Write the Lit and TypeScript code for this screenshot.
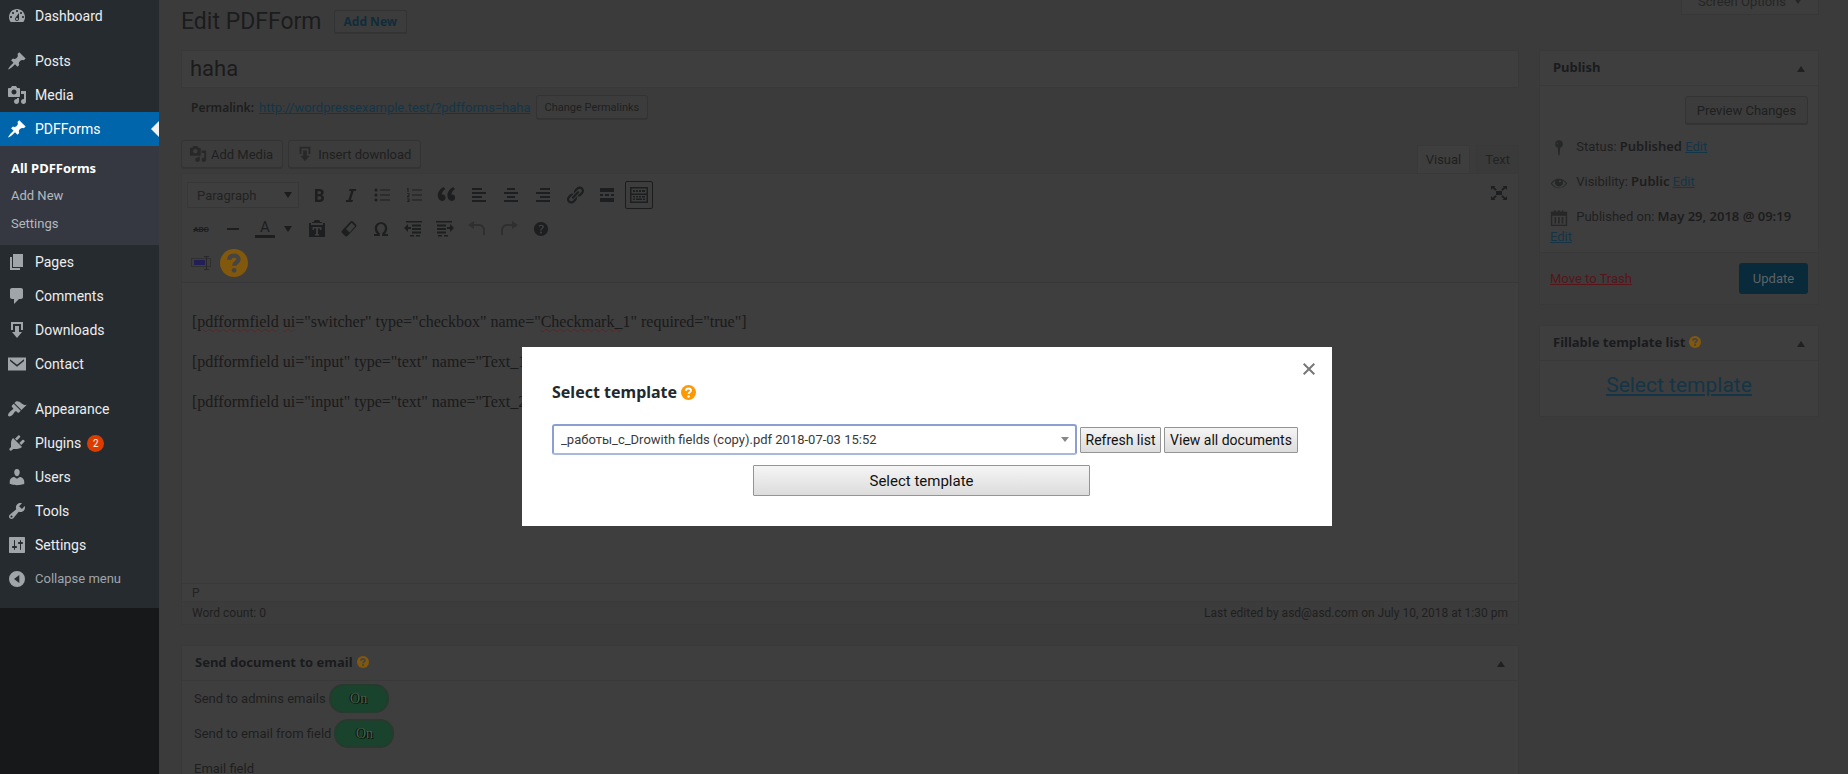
import { LitElement, html, svg, css, nothing } from "lit";
import { customElement } from "lit/decorators.js";
import { classMap } from "lit/directives/class-map.js";

const P: Record<string, string> = {
  dashboard: "M3.76 16h12.48c1.1-1.37 1.76-3.11 1.76-5 0-4.42-3.58-8-8-8s-8 3.58-8 8c0 1.89.66 3.63 1.76 5zM10 4c.55 0 1 .45 1 1s-.45 1-1 1-1-.45-1-1 .45-1 1-1zM6 6c.55 0 1 .45 1 1s-.45 1-1 1-1-.45-1-1 .45-1 1-1zm8 0c.55 0 1 .45 1 1s-.45 1-1 1-1-.45-1-1 .45-1 1-1zm-5.37 5.55L12 7v6c0 1.1-.9 2-2 2s-2-.9-2-2c0-.57.24-1.08.63-1.45zM4 10c.55 0 1 .45 1 1s-.45 1-1 1-1-.45-1-1 .45-1 1-1zm12 0c.55 0 1 .45 1 1s-.45 1-1 1-1-.45-1-1 .45-1 1-1zm-5 3c0-.55-.45-1-1-1s-1 .45-1 1 .45 1 1 1 1-.45 1-1z",
  pin: "M10.44 3.02l1.82-1.82 6.36 6.35-1.83 1.82c-1.05-.68-2.48-.57-3.41.36l-.75.75c-.92.93-1.04 2.35-.35 3.41l-1.83 1.82-2.41-2.41-2.8 2.79c-.42.42-3.38 2.71-3.8 2.29s1.86-3.39 2.28-3.81l2.79-2.79L4.1 9.36l1.83-1.82c1.05.69 2.48.57 3.4-.36l.75-.75c.93-.92 1.05-2.35.36-3.41z",
  media: "M13 11V4c0-.55-.45-1-1-1h-1.67L9 1H5L3.67 3H2c-.55 0-1 .45-1 1v7c0 .55.45 1 1 1h10c.55 0 1-.45 1-1zM7 4.5c1.38 0 2.5 1.12 2.5 2.5S8.38 9.5 7 9.5 4.5 8.38 4.5 7 5.62 4.5 7 4.5zM14 6h5v10.5c0 1.38-1.12 2.5-2.5 2.5S14 17.88 14 16.5s1.12-2.5 2.5-2.5c.17 0 .34.02.5.05V9h-3V6zm-4 8.05V13h2v3.5c0 1.38-1.12 2.5-2.5 2.5S7 17.88 7 16.5 8.12 14 9.5 14c.17 0 .34.02.5.05z",
  pages: "M6 15V2h10v13H6zm-1 1h8v2H3V5h2v11z",
  comments: "M5 2h9c1.1 0 2 .9 2 2v7c0 1.1-.9 2-2 2h-2l-5 5v-5H5c-1.1 0-2-.9-2-2V4c0-1.1.9-2 2-2z",
  download: "M14.01 4v6h2V2H4v8h2.01V4h8zm-2 2v6h3l-5 6-5-6h3V6h4z",
  email: "M1 3.500h18v13H1zM3 5.200v1.900l7 5.600 7-5.600V5.200l-7 5.600z",
  appearance: "M14.48 11.06L7.41 3.99l1.5-1.5c.5-.56 2.3-.47 3.51.32 1.21.8 1.43 1.28 2.91 2.1 1.18.64 2.45 1.26 4.45.85zm-.71.71L6.7 4.7 4.93 6.47c-.39.39-.39 1.02 0 1.41l1.06 1.06c.39.39.39 1.03 0 1.42-.6.6-1.43 1.11-2.21 1.69-.35.26-.7.53-1.01.84C1.43 14.23.4 16.08 1.4 17.07c.99 1 2.84-.03 4.18-1.36.31-.31.58-.66.85-1.02.57-.78 1.08-1.61 1.69-2.21.39-.39 1.02-.39 1.41 0l1.06 1.06c.39.39 1.02.39 1.41 0z",
  plugins: "M13.11 4.36L9.87 7.6 8 5.73l3.24-3.24c.35-.34 1.05-.2 1.56.32.52.51.66 1.21.31 1.55zm-8 1.77l.91-1.12 9.01 9.01-1.19.84c-.71.71-2.63 1.16-3.82 1.16H6.14L4.9 17.26c-.59.59-1.54.59-2.12 0-.59-.58-.59-1.53 0-2.12l1.24-1.24v-3.88c0-1.13.4-3.19 1.09-3.89zm7.26 3.97l3.24-3.24c.34-.35 1.04-.21 1.55.31.52.51.66 1.21.31 1.55l-3.24 3.25z",
  users: "M10 9.25c-2.27 0-2.73-3.44-2.73-3.44C7 4.02 7.82 2 9.97 2c2.16 0 2.98 2.02 2.71 3.81 0 0-.41 3.44-2.68 3.44zm0 2.57L12.72 10c2.39 0 4.52 2.33 4.52 4.53v2.49s-3.65 1.13-7.24 1.13c-3.65 0-7.24-1.13-7.24-1.13v-2.49c0-2.25 1.94-4.48 4.47-4.48z",
  tools: "M16.68 9.77c-1.34 1.34-3.3 1.67-4.95.99l-5.41 6.52c-.99.99-2.59.99-3.58 0s-.99-2.59 0-3.57l6.52-5.42c-.68-1.65-.35-3.61.99-4.95 1.28-1.28 3.12-1.62 4.72-1.06l-2.89 2.89 2.82 2.82 2.86-2.87c.53 1.58.18 3.39-1.08 4.65zM3.81 16.21c.4.39 1.04.39 1.43 0 .4-.4.4-1.04 0-1.43-.39-.4-1.03-.4-1.43 0-.39.39-.39 1.03 0 1.43z",
  settings: "M18 17V3c0-.55-.45-1-1-1H3c-.55 0-1 .45-1 1v14c0 .55.45 1 1 1h14c.55 0 1-.45 1-1zM8 11h1c.55 0 1 .45 1 1s-.45 1-1 1H8v1.5c0 .28-.22.5-.5.5s-.5-.22-.5-.5V13H6c-.55 0-1-.45-1-1s.45-1 1-1h1V5.5c0-.28.22-.5.5-.5s.5.22.5.5V11zm5-2h-1c-.55 0-1-.45-1-1s.45-1 1-1h1V5.5c0-.28.22-.5.5-.5s.5.22.5.5V7h1c.55 0 1 .45 1 1s-.45 1-1 1h-1v5.5c0 .28-.22.5-.5.5s-.5-.22-.5-.5V9z",
  collapse: "M10 2a8 8 0 1 0 0 16 8 8 0 0 0 0-16zM12.300 6v8L7 10z",
  bold: "M6 4v13h4.540c1.370 0 2.460-.33 3.260-1 .8-.66 1.200-1.580 1.200-2.770 0-.84-.17-1.510-.51-2.010s-.9-.85-1.670-1.030v-.09c.57-.1 1.020-.4 1.360-.9s.51-1.130.51-1.910c0-1.140-.39-1.980-1.170-2.500C12.750 4.260 11.500 4 9.780 4H6zm2.570 5.150V6.260h1.360c.73 0 1.270.11 1.610.32.34.22.51.58.51 1.070 0 .54-.16.92-.47 1.150s-.82.35-1.510.35h-1.500zm0 2.190h1.600c1.440 0 2.160.53 2.160 1.610 0 .6-.17 1.050-.51 1.340s-.86.43-1.570.43H8.570v-3.380z",
  italic: "M14.780 6h-2.130l-2.800 9h2.120l-.62 2H4.600l.62-2h2.140l2.800-9H8.030l.62-2h6.750z",
  ul: "M3 3.500a1.500 1.500 0 1 1 0 3 1.500 1.500 0 0 1 0-3zm0 5a1.500 1.500 0 1 1 0 3 1.500 1.500 0 0 1 0-3zm0 5a1.500 1.500 0 1 1 0 3 1.500 1.500 0 0 1 0-3zM7 4.500h10V5.500H7zM7 9.500h10V10.500H7zM7 14.500h10V15.500H7z",
  ol: "M3.500 3v4h-1V4.500H2V3.500zM2 8.300h2.500v2L3.200 11.500h1.300v.8H2v-1l1.500-1.400V9.100H2zM2 13.500h2.500V17H2v-.8h1.500v-.6H2.400v-.7h1.100v-.6H2zM7 4.500h10V5.500H7zM7 9.500h10V10.500H7zM7 14.500h10V15.500H7z",
  quote: "M8.540 12.740c0-.87-.24-1.610-.72-2.220-.73-.92-2.140-1.030-2.960-.85-.34-1.930 1.300-4.390 3.420-5.450L6.650 1.940C3.450 3.460.31 6.960.85 11.370 1.190 14.160 2.800 16 5.080 16c1.040 0 1.900-.32 2.520-.94.63-.62.94-1.390.94-2.320zm9.590 0c0-.87-.24-1.610-.72-2.220-.73-.92-2.140-1.030-2.960-.85-.34-1.930 1.300-4.390 3.420-5.450l-1.630-2.280c-3.200 1.520-6.340 5.020-5.800 9.430.34 2.790 1.950 4.630 4.230 4.630 1.040 0 1.900-.32 2.520-.94.63-.62.94-1.390.94-2.320z",
  left: "M3 3h10v2H3zM3 7h14v2H3zM3 11h10v2H3zM3 15h14v2H3z",
  center: "M6 3h8v2H6zM3 7h14v2H3zM6 11h8v2H6zM3 15h14v2H3z",
  right: "M7 3h10v2H7zM3 7h14v2H3zM7 11h10v2H7zM3 15h14v2H3z",
  link: "M17.740 2.760c1.680 1.690 1.680 4.410 0 6.100l-1.530 1.520c-1.120 1.120-2.700 1.470-4.140 1.090l2.620-2.610.76-.77.76-.76c.84-.84.84-2.200 0-3.040-.84-.85-2.200-.85-3.040 0l-.77.76-3.380 3.380c-.37-1.440-.02-3.020 1.100-4.140l1.520-1.530c1.690-1.680 4.420-1.680 6.100 0zM8.590 13.430l5.340-5.340c.42-.42.42-1.100 0-1.520-.44-.43-1.130-.39-1.530 0l-5.330 5.340c-.42.42-.42 1.100 0 1.520.44.43 1.130.39 1.520 0zm-.76 2.290l4.140-4.150c.38 1.440.03 3.020-1.090 4.140l-1.520 1.530c-1.690 1.680-4.410 1.680-6.100 0-1.680-1.680-1.680-4.420 0-6.100l1.530-1.520c1.120-1.120 2.700-1.470 4.140-1.100l-4.140 4.150c-.85.84-.85 2.200 0 3.050.84.840 2.200.840 3.040 0z",
  more: "M3 3h14v4H3zM3 9h3v2H3zM8 9h4v2H8zM14 9h3v2h-3zM3 13h14v4H3z",
  kitchen: "M1 2h18v16H1zM2.500 3.500v5h15v-5zM2.500 10v6.500h15V10zM4 5h2v2H4zM7 5h2v2H7zM10 5h2v2h-2zM13 5h3v2h-3zM4 11h2v1.500H4zM7 11h2v1.500H7zM10 11h2v1.500h-2zM13 11h3v1.500h-3zM4 13.500h2V15H4zM7 13.500h6V15H7zM14 13.500h2V15h-2z",
  paste: "M7 3V2.500C7 1.600 7.600 1 8.500 1h3c.9 0 1.500.6 1.500 1.500V3h2v1H5V3zM2 4h2v2h12V4h2v14H2zM5.500 8v3H7v-1.500h2V15H8v1.500h4V15h-1V9.500h2V11h1.500V8z",
  eraser: "M11.500 2.500c.7-.7 1.700-.7 2.400 0l3 3c.7.7.7 1.700 0 2.400L8.500 17c-.7.7-1.700.7-2.400 0l-3-3c-.7-.7-.7-1.700 0-2.400zM12.700 3.800L7 10l3.600 3.500 5.500-6.200z",
  omega: "M10 5.100c-2.400 0-3.900 1.700-3.900 4.200 0 2.100 1 3.700 2.700 5V17H3v-2h3.200C4.600 13.500 3.800 11.500 3.800 9.300 3.800 5.800 6.200 3.200 10 3.200s6.200 2.600 6.200 6.100c0 2.200-.8 4.200-2.400 5.700H17v2h-5.800v-2.700c1.700-1.300 2.700-2.900 2.700-5 0-2.500-1.500-4.200-3.900-4.200z",
  outdent: "M3 2h16v1.500H3zM9 5.500h9v2H9zM9 9h9v2H9zM9 12.500h9v2H9zM7 16h4v1.500H7zM13 16h4v1.500h-4zM1 9l4-4v3h3v2H5v3z",
  indent: "M1 2h16v1.500H1zM2 5.500h9v2H2zM2 9h9v2H2zM2 12.500h9v2H2zM3 16h4v1.500H3zM9 16h4v1.500H9zM19 9l-4-4v3h-3v2h3v3z",
  undo: "M12 5H7V2L1 6l6 4V7h5c2.200 0 4 1.800 4 4v5h2v-5c0-3.300-2.700-6-6-6z",
  redo: "M8 5h5V2l6 4-6 4V7H8c-2.200 0-4 1.800-4 4v5H2v-5c0-3.300 2.700-6 6-6z",
  help: "M17 10c0-3.870-3.140-7-7-7-3.870 0-7 3.130-7 7s3.130 7 7 7c3.860 0 7-3.130 7-7zm-6.300 1.480H9.140v-.43c0-.38.08-.7.24-.98s.46-.57.88-.89c.41-.29.68-.53.81-.71.14-.18.2-.39.2-.62 0-.25-.09-.44-.28-.58-.19-.13-.45-.19-.79-.19-.58 0-1.250.19-2 .57l-.64-1.280c.87-.49 1.800-.74 2.770-.74.81 0 1.450.2 1.920.58.48.39.71.91.71 1.550 0 .43-.09.8-.29 1.110-.19.32-.57.67-1.110 1.060-.38.28-.61.49-.71.63-.1.15-.15.34-.15.570v.35zm-1.470 2.740c-.18-.17-.27-.42-.27-.73 0-.33.08-.58.26-.75s.43-.25.77-.25c.32 0 .57.09.75.26s.27.42.27.74c0 .3-.09.55-.27.72-.18.18-.43.27-.75.27-.33 0-.58-.09-.76-.26z",
  full: "M7 8h6v4H7zM2 3h4.500L5.200 4.200l2.600 2.300L6.500 7.700 3.500 5.200 2 7zM18 3v4l-1.500-1.800-3 2.500-1.300-1.200 2.600-2.300L13.500 3zM2 17v-4l1.500 1.800 3-2.500 1.300 1.200-2.600 2.300L6.500 17zM18 17h-4.500l1.300-1.200-2.600-2.300 1.300-1.200 3 2.500L18 13z",
  status: "M10 1.500a4.200 4.200 0 0 1 1.300 8.200L10.800 17l-.8 2-.8-2-.5-7.300A4.200 4.200 0 0 1 10 1.500zM8.300 4c-.8.5-1.100 1.200-1 2 .9-.2 1.600-.8 2-1.700z",
  eye: "M18.300 9.500C15 4.900 8.500 3.800 3.900 7.200 2.700 8 1.700 9.300.9 10.500c.8 1.200 1.800 2.400 3 3.300 4.600 3.300 11.100 2.200 14.400-2.400l.8-.9zM10.100 7.200c.5-.5 1.300-.5 1.800 0s.5 1.300 0 1.800-1.300.5-1.800 0-.5-1.300 0-1.800zM10 15.200c-3.300 0-5.900-2-7.700-4.700C3.400 9 4.700 7.800 6.300 7a4.400 4.400 0 1 0 7.400 0c1.500.8 2.900 2 4 3.500-1.900 2.700-4.400 4.700-7.700 4.700z",
  calendar: "M15 3h4v16H1V3h3c0-.8.600-1.500 1.400-1.500S7 2.200 7 3h1.500c0-.8.600-1.500 1.500-1.500s1.500.7 1.500 1.500H13c0-.8.300-1.500 1-1.500s1 .7 1 1.500zM2.500 7.500v10h15v-10zM5 9h1.800v7H5zM9 9h1.800v7H9zM13 9h1.800v7H13z",
};
const icon = (name: string, size = 20) => html`<svg class="ic" width=${size} height=${size} viewBox="0 0 20 20" fill="currentColor" fill-rule="evenodd" aria-hidden="true">${svg`<path d=${P[name]}></path>`}</svg>`;
const qmark = (cls: string) => html`<svg class="q ${cls}" viewBox="0 0 20 20" aria-hidden="true"><circle class="qc" cx="10" cy="10" r="10"></circle><path class="qp" d="M6.600 7.800C6.700 5.600 8.200 4.700 10 4.700c1.900 0 3.300 1 3.300 2.700 0 2.300-3.200 2.200-3.200 4.600"></path><circle class="qd" cx="10.100" cy="15.200" r="1.700"></circle></svg>`;

type Item = { icon: string; text: string; gap?: boolean; current?: boolean; badge?: string };
const MENU: Item[] = [
  { icon: "dashboard", text: "Dashboard" },
  { icon: "pin", text: "Posts", gap: true },
  { icon: "media", text: "Media" },
  { icon: "pin", text: "PDFForms", current: true },
  { icon: "pages", text: "Pages" },
  { icon: "comments", text: "Comments" },
  { icon: "download", text: "Downloads" },
  { icon: "email", text: "Contact" },
  { icon: "appearance", text: "Appearance", gap: true },
  { icon: "plugins", text: "Plugins", badge: "2" },
  { icon: "users", text: "Users" },
  { icon: "tools", text: "Tools" },
  { icon: "settings", text: "Settings" },
];

@customElement("admin-menu")
export class AdminMenu extends LitElement {
  static styles = css`
    :host { display: block; background: #17181a; }
    nav { background: #262b30; padding-bottom: 12px; margin-top: -1px; }
    ul { list-style: none; margin: 0; padding: 0; }
    a, button { box-sizing: border-box; display: flex; align-items: center; height: 34px; width: 100%; padding: 0 0 0 7px; gap: 8px; color: #eee; font: 14px/18px Roboto, sans-serif; text-decoration: none; background: none; border: 0; text-align: left; position: relative; }
    .ic { color: #a0a5aa; flex: none; }
    .gap { margin-top: 11px; }
    .current > a { background: #0065ab; color: #fff; }
    .current > a .ic { color: #fff; }
    .current > a::after { content: ""; position: absolute; right: 0; top: 9px; border: 8px solid transparent; border-left: 0; border-right-color: #f1f1f1; }
    .sub { background: #353840; padding: 8px 0 7px; }
    .sub a { height: 28px; padding-left: 11px; font-size: 13px; color: #b4b9be; }
    .sub .on { color: #fff; font: bold 13px/18px "Noto Sans", sans-serif; }
    .badge { min-width: 17px; height: 17px; border-radius: 9px; background: #dc3c00; color: #fff; font-size: 10px; line-height: 17px; text-align: center; margin-left: -2px; }
    button { color: #a0a5aa; font-size: 13px; }
  `;
  render() {
    return html`<nav aria-label="Main menu"><ul>
      ${MENU.map((m) => html`<li class=${classMap({ gap: !!m.gap, current: !!m.current })}>
        <a href="#">${icon(m.icon)}<span>${m.text}</span>${m.badge ? html`<span class="badge">${m.badge}</span>` : nothing}</a>
        ${m.current ? html`<ul class="sub"><li><a class="on" href="#">All PDFForms</a></li><li><a href="#">Add New</a></li><li><a href="#">Settings</a></li></ul>` : nothing}
      </li>`)}
      <li><button type="button">${icon("collapse")}<span>Collapse menu</span></button></li>
    </ul></nav>`;
  }
}

const shared = css`
  * { box-sizing: border-box; }
  a { color: #143547; text-decoration: underline; }
  b { font-family: "Noto Sans", sans-serif; font-weight: 600; color: #1d1d1d; font-size: 13px; }
  button, input, select { font-family: Roboto, sans-serif; margin: 0; }
  .btn { display: inline-flex; align-items: center; justify-content: center; height: 28px; padding: 0 10px; font-size: 13px; color: #1f1f1f; background: #3c3c3c; border: 1px solid #333; border-radius: 3px; box-shadow: 0 1px 0 #343434; white-space: nowrap; }
  .box { background: #3e3e3e; border: 1px solid #393939; }
  .head { display: flex; align-items: center; height: 35px; padding: 0 13px 2px; border-bottom: 1px solid #393939; }
  h2 { margin: 0; font: bold 13px/20px "Noto Sans", sans-serif; color: #191b1d; display: flex; align-items: center; gap: 4px; flex: 1; }
  .toggle { width: 8px; height: 6px; padding: 0; border: 0; background: #202020; clip-path: polygon(50% 0, 100% 100%, 0 100%); margin: 4px 0 0; }
  .q { width: 12px; height: 12px; flex: none; }
  .qc { fill: #82580d; }
  .qp { fill: none; stroke: #444; stroke-width: 3; }
  .qd { fill: #444; }
`;

@customElement("post-editor")
export class PostEditor extends LitElement {
  static styles = [shared, css`
    :host { display: block; min-width: 0; }
    .title { display: block; width: 100%; height: 38px; padding: 0 8px 2px; font-size: 22px; color: #1b1b1b; background: #3e3e3e; border: 1px solid #383838; outline: 0; }
    .perma { display: flex; align-items: center; gap: 5px; height: 24px; margin: 7px 10px 0; font-size: 13px; }
    .perma b { font-size: 12px; }
    .small { height: 24px; font-size: 11px; padding: 0 8px; }
    .tools { display: flex; align-items: flex-end; gap: 5px; margin-top: 21px; height: 33px; }
    .tools .btn { align-self: flex-start; gap: 4px; padding: 0 9px 0 7px; }
    .tools .ic { color: #282828; }
    .tabs { display: flex; gap: 6px; margin-left: auto; }
    .tab { height: 28px; padding: 0 8px; border: 1px solid #393939; border-bottom: 0; background: #3a3a3a; color: #232323; font-size: 13px; }
    .tab.on { background: #3e3e3e; color: #1e1e1e; }
    .bar { padding: 4px 3px 0; height: 109px; border-bottom: 1px solid #373737; color: #1d1e1f; background: #3d3d3d; }
    .row { display: flex; align-items: center; height: 34px; }
    .row button { flex: none; width: 28px; height: 28px; margin: 0 2px; padding: 0; border: 1px solid transparent; background: none; color: inherit; display: flex; align-items: center; justify-content: center; }
    .row .pressed { border-color: #1c1c1c; border-radius: 2px; }
    .row .faint { color: #2f2f2f; }
    .row .narrow { width: 14px; margin: 0 6px 0 0; }
    .pick { display: flex; align-items: center; margin: 0 4px 0 2px; }
    .pick select { appearance: none; width: 112px; height: 26px; padding: 0 9px; font-size: 13px; color: #222; background: #3e3e3e; border: 1px solid #373737; }
    .tri { width: 8px; height: 6px; background: #1c1c1c; clip-path: polygon(0 0, 100% 0, 50% 100%); }
    .pick .tri { margin-left: -15px; margin-right: 7px; pointer-events: none; }
    .abc { font: bold 8px Roboto, sans-serif; text-decoration: line-through; }
    .row .full { margin: 0 2px 4px auto; }
    .fore { font: 15px/15px Roboto, sans-serif; border-bottom: 3px solid #1d1e1f; width: 20px; text-align: center; }
    .row .big { margin: 0 0 0 3px; }
    .big .q { width: 28px; height: 28px; }
    .text { padding: 13px 10px 0; height: 300px; font: 16px/24px "Liberation Serif", serif; color: #1a1a1a; }
    .text p { margin: 16px 0; }
    .text p:first-child { margin-top: 14px; }
    .sp { text-decoration: underline wavy #5f2222 1px; text-underline-offset: 1px; }
    .path { height: 18px; padding: 0 10px; border-top: 1px solid #393939; font-size: 12px; line-height: 18px; color: #222; }
    .foot { display: flex; justify-content: space-between; height: 23px; align-items: center; padding: 0 10px; border-top: 1px solid #393939; background: #3c3c3c; font-size: 12px; color: #1f1f1f; }
    .mail { margin-top: 20px; height: 160px; }
    .opt { display: flex; align-items: center; gap: 3px; height: 35px; padding: 0 12px; font-size: 13px; color: #1e1e1e; }
    .sw { width: 60px; height: 29px; padding: 0; border: 2px solid #263a2d; border-radius: 14px; background: #19432c; color: #47604f; font: 14px "Liberation Serif", serif; text-shadow: 1px 1px 0 #0a130d, -1px 0 0 #0a130d; }
  `];
  private tb(name: string, label: string, cls = "") {
    return html`<button type="button" class=${cls} aria-label=${label}>${icon(name)}</button>`;
  }
  render() {
    return html`
      <input class="title" aria-label="Title" .value=${"haha"} />
      <div class="perma"><b>Permalink:</b><a href="#">http://wordpressexample.test/?pdfforms=haha</a><button type="button" class="btn small">Change Permalinks</button></div>
      <div class="tools">
        <button type="button" class="btn">${icon("media", 18)}Add Media</button>
        <button type="button" class="btn">${icon("download", 18)}Insert download</button>
        <div class="tabs"><button type="button" class="tab on">Visual</button><button type="button" class="tab">Text</button></div>
      </div>
      <section class="box">
        <div class="bar">
          <div class="row">
            <div class="pick"><select aria-label="Block format"><option>Paragraph</option></select><span class="tri"></span></div>
            ${this.tb("bold", "Bold")}${this.tb("italic", "Italic")}${this.tb("ul", "Bulleted list")}${this.tb("ol", "Numbered list")}
            ${this.tb("quote", "Blockquote")}${this.tb("left", "Align left")}${this.tb("center", "Align center")}${this.tb("right", "Align right")}
            ${this.tb("link", "Insert link")}${this.tb("more", "Read more")}${this.tb("kitchen", "Toolbar toggle", "pressed")}
            ${this.tb("full", "Fullscreen", "full")}
          </div>
          <div class="row">
            <button type="button" aria-label="Strikethrough"><span class="abc">ABC</span></button>
            <button type="button" aria-label="Horizontal line"><svg width="12" height="2"><path d="M0 1h12" stroke="currentColor" stroke-width="2"></path></svg></button>
            <button type="button" aria-label="Text color"><span class="fore">A</span></button>
            <button type="button" class="narrow" aria-label="More colors"><span class="tri"></span></button>
            ${this.tb("paste", "Paste as text")}${this.tb("eraser", "Clear formatting")}${this.tb("omega", "Special character")}${this.tb("outdent", "Decrease indent")}
            ${this.tb("indent", "Increase indent")}${this.tb("undo", "Undo", "faint")}${this.tb("redo", "Redo", "faint")}${this.tb("help", "Keyboard shortcuts")}
          </div>
          <div class="row">
            <button type="button" aria-label="Insert field"><svg width="20" height="16" viewBox="0 0 20 16" fill="none"><rect x=".5" y="3.500" width="19" height="8" stroke="#303030"></rect><rect x="3" y="5" width="11" height="5" fill="#231f55"></rect><path d="M13 1.500h5M15.500 1.500v13M13 14.500h5" stroke="#282828"></path></svg></button>
            <button type="button" class="big" aria-label="Help">${qmark("")}</button>
          </div>
        </div>
        <div class="text">
          <p>[<span class="sp">pdfformfield</span> <span class="sp">ui</span>="switcher" type="checkbox" name="<span class="sp">Checkmark_</span>1" required="true"]</p>
          <p>[pdfformfield ui="input" type="text" name="Text_1"]</p>
          <p>[pdfformfield ui="input" type="text" name="Text_2"]</p>
        </div>
        <div class="path">P</div>
        <div class="foot"><span>Word count: 0</span><span>Last edited by asd@asd.com on July 10, 2018 at 1:30 pm</span></div>
      </section>
      <section class="box mail">
        <div class="head"><h2>Send document to email${qmark("")}</h2><button type="button" class="toggle" aria-label="Toggle panel"></button></div>
        <div class="opt"><span id="a1">Send to admins emails</span><button class="sw" type="button" role="switch" aria-checked="true" aria-labelledby="a1">On</button></div>
        <div class="opt"><span id="a2">Send to email from field</span><button class="sw" type="button" role="switch" aria-checked="true" aria-labelledby="a2">On</button></div>
        <div class="opt">Email field</div>
      </section>`;
  }
}

@customElement("post-side")
export class PostSide extends LitElement {
  static styles = [shared, css`
    :host { display: block; font-size: 13px; color: #202020; }
    .acts { display: flex; justify-content: flex-end; padding: 10px; }
    .acts .btn { padding: 0 11px; width: 123px; }
    .line { display: block; padding: 7px 10px; line-height: 20px; }
    .line .ic { color: #262727; vertical-align: -6px; margin-right: 5px; }
    .line:last-child { padding-bottom: 5px; }
    .info { margin-top: -5px; }
    .major { display: flex; align-items: center; justify-content: space-between; height: 52px; padding: 0 10px; border-top: 1px solid #393939; background: #3c3c3c; }
    .trash { color: #561519; }
    .update { width: 69px; height: 31px; border: 0; border-radius: 3px; background: #082a3a; color: #5d6468; font-size: 13px; }
    .second { margin-top: 20px; }
    .pickit { display: flex; justify-content: center; height: 55px; padding-top: 10px; font-size: 21px; line-height: 28px; }
  `];
  render() {
    return html`
      <section class="box">
        <div class="head"><h2>Publish</h2><button type="button" class="toggle" aria-label="Toggle panel"></button></div>
        <div class="acts"><button type="button" class="btn">Preview Changes</button></div>
        <div class="info">
          <div class="line">${icon("status", 18)} Status: <b>Published</b> <a href="#">Edit</a></div>
          <div class="line">${icon("eye", 18)} Visibility: <b>Public</b> <a href="#">Edit</a></div>
          <div class="line">${icon("calendar", 18)} Published on: <b>May 29, 2018 @ 09:19</b> <a href="#">Edit</a></div>
        </div>
        <div class="major"><a class="trash" href="#">Move to Trash</a><button type="button" class="update">Update</button></div>
      </section>
      <section class="box second">
        <div class="head"><h2>Fillable template list${qmark("")}</h2><button type="button" class="toggle" aria-label="Toggle panel"></button></div>
        <div class="pickit"><a href="#">Select template</a></div>
      </section>`;
  }
}

@customElement("template-dialog")
export class TemplateDialog extends LitElement {
  static styles = css`
    * { box-sizing: border-box; }
    :host { position: fixed; inset: 0; display: flex; justify-content: center; align-items: flex-start; padding: 347px 0 0 6px; }
    .dlg { position: relative; width: 810px; background: #fff; padding: 33px 34px 30px 30px; font-family: Roboto, sans-serif; }
    h1 { display: flex; align-items: center; gap: 4px; margin: 0; font: bold 16px/24px "Noto Sans", sans-serif; color: #23282d; }
    .q { width: 15px; height: 15px; }
    .qc { fill: #ff9800; }
    .qp { fill: none; stroke: #fff; stroke-width: 2.600; }
    .qd { fill: #fff; }
    .row { display: flex; align-items: center; gap: 3px; margin-top: 20px; }
    .pick { flex: 1; display: flex; align-items: center; }
    select { appearance: none; flex: 1; height: 31px; padding: 0 7px; border: 2px solid #8c9fd2; border-bottom-color: #a9b8e0; border-radius: 3px; background: #fff; color: #3a3a3a; font: 13px Roboto, sans-serif; outline: 0; }
    .tri { width: 8px; height: 5px; background: #888; clip-path: polygon(0 0, 100% 0, 50% 100%); margin: 0 8px 0 -16px; pointer-events: none; }
    .btn { height: 26px; padding: 0; border: 1px solid #949494; border-radius: 1px; background: linear-gradient(#f5f5f5, #dcdcdc); color: #111; font: 14px Roboto, sans-serif; white-space: nowrap; }
    .refresh { width: 81px; }
    .view { width: 134px; }
    .choose { display: block; width: 337px; height: 31px; margin: 10px auto 0; font-size: 15px; }
    .wrap { padding-right: 7px; }
    .close { position: absolute; right: 14px; top: 13px; width: 18px; height: 18px; padding: 0; border: 0; background: none; display: grid; place-items: center; }
  `;
  render() {
    return html`<div class="dlg" role="dialog" aria-modal="true" aria-labelledby="t">
      <button class="close" type="button" aria-label="Close"><svg width="12" height="12" viewBox="0 0 12 12"><path d="M.7.7l10.600 10.600M11.300.7L.7 11.300" stroke="#777" stroke-width="2"></path></svg></button>
      <h1 id="t">Select template ${qmark("")}</h1>
      <div class="row">
        <div class="pick"><select aria-label="Template"><option>_работы_с_Drowith fields (copy).pdf 2018-07-03 15:52</option></select><span class="tri"></span></div>
        <button class="btn refresh" type="button">Refresh list</button>
        <button class="btn view" type="button">View all documents</button>
      </div>
      <div class="wrap"><button class="btn choose" type="button">Select template</button></div>
    </div>`;
  }
}

@customElement("app-root")
export class AppRoot extends LitElement {
  static styles = [shared, css`
    :host { display: grid; grid-template-columns: 159px 1fr; height: 100vh; overflow: hidden; background: #3b3b3b; font-family: Roboto, sans-serif; font-size: 13px; color: #202020; }
    main { padding: 0 29px 0 22px; min-width: 0; }
    .top { display: flex; align-items: flex-start; height: 50px; gap: 12px; }
    h1 { margin: 7px 0 0; font-size: 23px; line-height: 30px; font-weight: 400; color: #1b1c1d; }
    .add { margin-top: 10px; height: 23px; font: bold 12px "Noto Sans", sans-serif; color: #102c3a; border-radius: 2px; padding: 0 9px; }
    .screen { margin-left: auto; margin-top: -13px; width: 138px; height: 28px; border: 1px solid #373737; background: #3d3d3d; color: #252525; font-size: 13px; display: flex; align-items: center; justify-content: center; gap: 8px; }
    .tri { width: 8px; height: 6px; background: #252525; clip-path: polygon(0 0, 100% 0, 50% 100%); }
    .cols { display: grid; grid-template-columns: minmax(0, 1fr) 280px; gap: 20px; align-items: start; }
  `];
  render() {
    return html`<admin-menu></admin-menu>
      <main>
        <div class="top"><h1>Edit PDFForm</h1><button type="button" class="btn add">Add New</button><button type="button" class="screen">Screen Options<span class="tri"></span></button></div>
        <div class="cols"><post-editor></post-editor><post-side></post-side></div>
      </main>
      <template-dialog></template-dialog>`;
  }
}
